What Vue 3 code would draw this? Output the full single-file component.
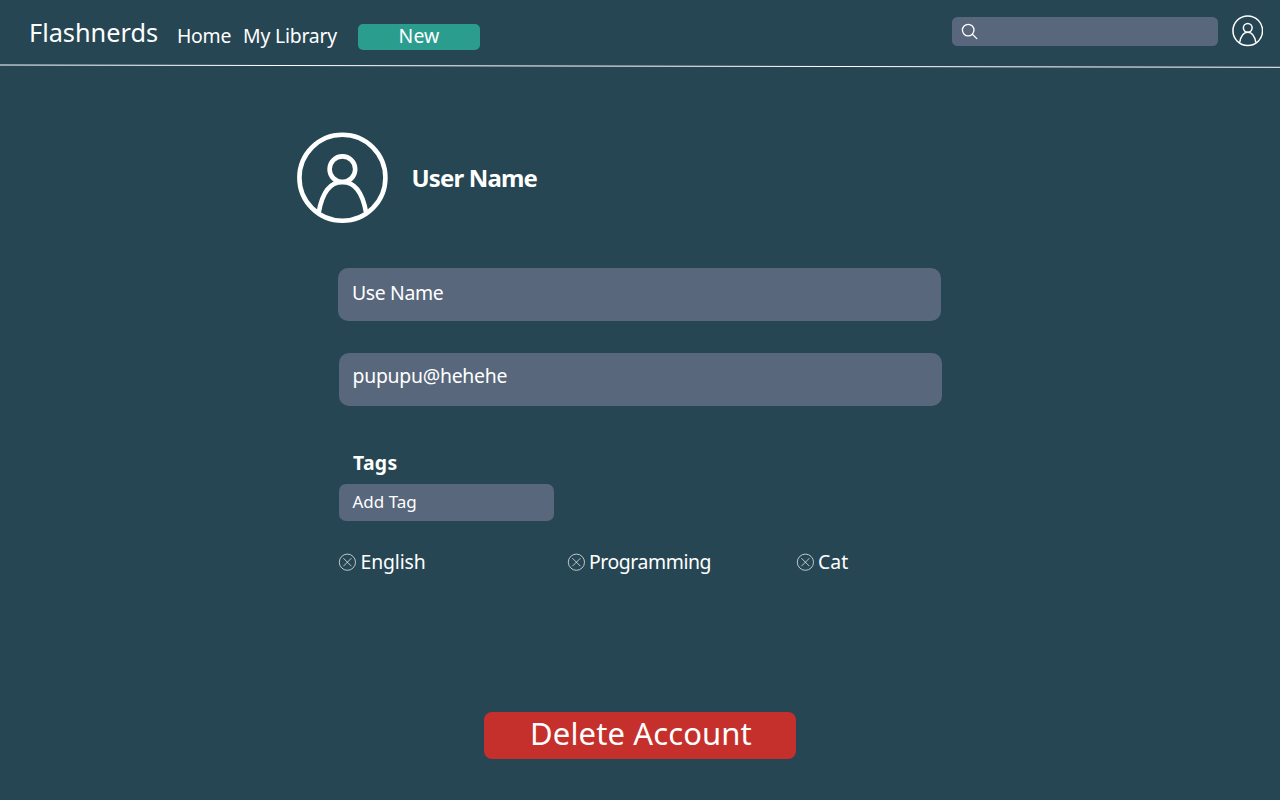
<script setup>
const tags = [
  { label: 'English', cls: 'english' },
  { label: 'Programming', cls: 'programming' },
  { label: 'Cat', cls: 'cat' },
]
</script>

<template>
  <div class="page">
    <header class="header">
      <div class="brand">Flashnerds</div>
      <nav class="nav">
        <a class="home">Home</a>
        <a class="library">My Library</a>
      </nav>
      <button class="new">New</button>
      <div class="search">
        <svg width="18" height="18" viewBox="0 0 18 18" fill="none" stroke="#fff" stroke-width="1.3" stroke-linecap="round">
          <circle cx="7.2" cy="7.1" r="5.8" />
          <path d="M11.4 11.3 L15.8 15.6" />
        </svg>
      </div>
      <svg class="mini" viewBox="0 0 92 92" fill="none" stroke="#fff" stroke-width="4.4">
        <circle cx="46" cy="46" r="43.2" />
        <circle cx="46" cy="37.5" r="12.8" />
        <path d="M22.3 81 C25.5 62 33 50.3 46 50.3 C59 50.3 66.5 62 69.7 81" />
      </svg>
      <svg class="rule" width="1280" height="6" viewBox="0 0 1280 6">
        <line x1="0" y1="2" x2="1280" y2="4.3" stroke="#fff" stroke-width="1" />
      </svg>
    </header>

    <main class="main">
      <section class="profile">
        <svg class="avatar" width="92" height="92" viewBox="0 0 92 92" fill="none" stroke="#fff" stroke-width="4.6">
          <circle cx="46.4" cy="45.7" r="43" />
          <circle cx="46.4" cy="37.2" r="12.8" />
          <path d="M22.7 80.7 C25.9 62 33.4 50 46.4 50 C59.4 50 66.9 62 70.1 80.7" />
        </svg>
        <h1>User Name</h1>
      </section>
      <div class="field name"><span>Use Name</span></div>
      <div class="field email"><span>pupupu@hehehe</span></div>
      <h2>Tags</h2>
      <div class="add"><span>Add Tag</span></div>
      <ul class="tags">
        <li v-for="t in tags" :key="t.label" :class="t.cls">
          <svg width="18" height="18" viewBox="0 0 18 18" fill="none" stroke="#fff" stroke-width="0.7">
            <circle cx="9.4" cy="9.2" r="8.1" />
            <path d="M5.4 5.2 L13.4 13.2 M13.4 5.2 L5.4 13.2" />
          </svg>
          <span>{{ t.label }}</span>
        </li>
      </ul>
      <button class="delete">Delete Account</button>
    </main>
  </div>
</template>

<style>
body { margin: 0; background: #264653; }
</style>

<style scoped>
.page {
  width: 1280px;
  height: 800px;
  overflow: hidden;
  background: #264653;
  color: #fff;
  font-family: "Noto Sans", "Open Sans", sans-serif;
  font-size: 19.4px;
  line-height: 24px;
}
.header {
  position: relative;
  display: flex;
  align-items: flex-start;
  height: 69px;
  white-space: nowrap;
}
.brand {
  width: 148px;
  padding: 17px 0 0 29px;
  box-sizing: border-box;
  font-size: 25.3px;
  line-height: 30px;
  letter-spacing: 0;
}
.nav { display: flex; width: 210px; padding-top: 23.5px; }
.home { box-sizing: border-box; width: 95px; padding-left: 29px; letter-spacing: -0.25px; }
.library { letter-spacing: -0.2px; }
button {
  border: 0;
  padding: 0;
  color: #fff;
  font-family: inherit;
  box-sizing: border-box;
}
.new {
  width: 122px;
  height: 26px;
  margin-top: 24.3px;
  padding-bottom: 2px;
  border-radius: 5px;
  background: #2a9d8f;
  font-size: 19.4px;
  line-height: 24px;
  letter-spacing: 0.1px;
}
.search {
  width: 266px;
  height: 29px;
  margin: 16.5px 0 0 471.5px;
  border-radius: 5.5px;
  background: #58677c;
}
.search svg { display: block; margin: 6.5px 0 0 9.5px; }
.mini { width: 31.5px; height: 31.5px; margin: 15.3px 0 0 14.3px; }
.rule { position: absolute; left: 0; top: 63px; }
.main { padding: 63px 338px 0; }
.profile { display: flex; align-items: center; height: 92px; margin-left: -42px; }
h1 {
  margin: 0 0 0 23.5px;
  font-size: 24px;
  line-height: 30px;
  letter-spacing: -0.85px;
}
.field {
  box-sizing: border-box;
  width: 603px;
  height: 53px;
  padding-left: 14px;
  border-radius: 10px;
  background: #58677c;
}
.name { margin-top: 44px; padding-top: 13px; letter-spacing: -0.35px; }
.email { margin: 32px 0 0 1px; padding-top: 11px; padding-left: 13.5px; letter-spacing: -0.25px; }
h2 { margin: 45px 0 0 15px; font-size: 19.4px; line-height: 24px; letter-spacing: 0.3px; }
.add {
  box-sizing: border-box;
  width: 215px;
  height: 37px;
  margin: 9px 0 0 1px;
  padding: 6px 0 0 13.5px;
  border-radius: 7px;
  background: #58677c;
  font-size: 17px;
  letter-spacing: 0;
}
.tags { display: flex; width: 700px; margin: 29px 0 0; padding: 0; list-style: none; }
.tags li { display: flex; align-items: center; width: 229px; }
.tags svg { flex: none; margin: 0 4.5px 1px 0; }
.english { letter-spacing: -0.12px; }
.programming { letter-spacing: -0.42px; }
.programming svg, .cat svg { margin-right: 4px; }
.delete {
  display: block;
  width: 312px;
  height: 47px;
  margin: 138px 0 0 146px;
  padding: 0 0 5px 2px;
  border-radius: 8px;
  background: #c5302c;
  font-size: 31px;
  line-height: 40px;
  letter-spacing: 0.12px;
}
</style>
